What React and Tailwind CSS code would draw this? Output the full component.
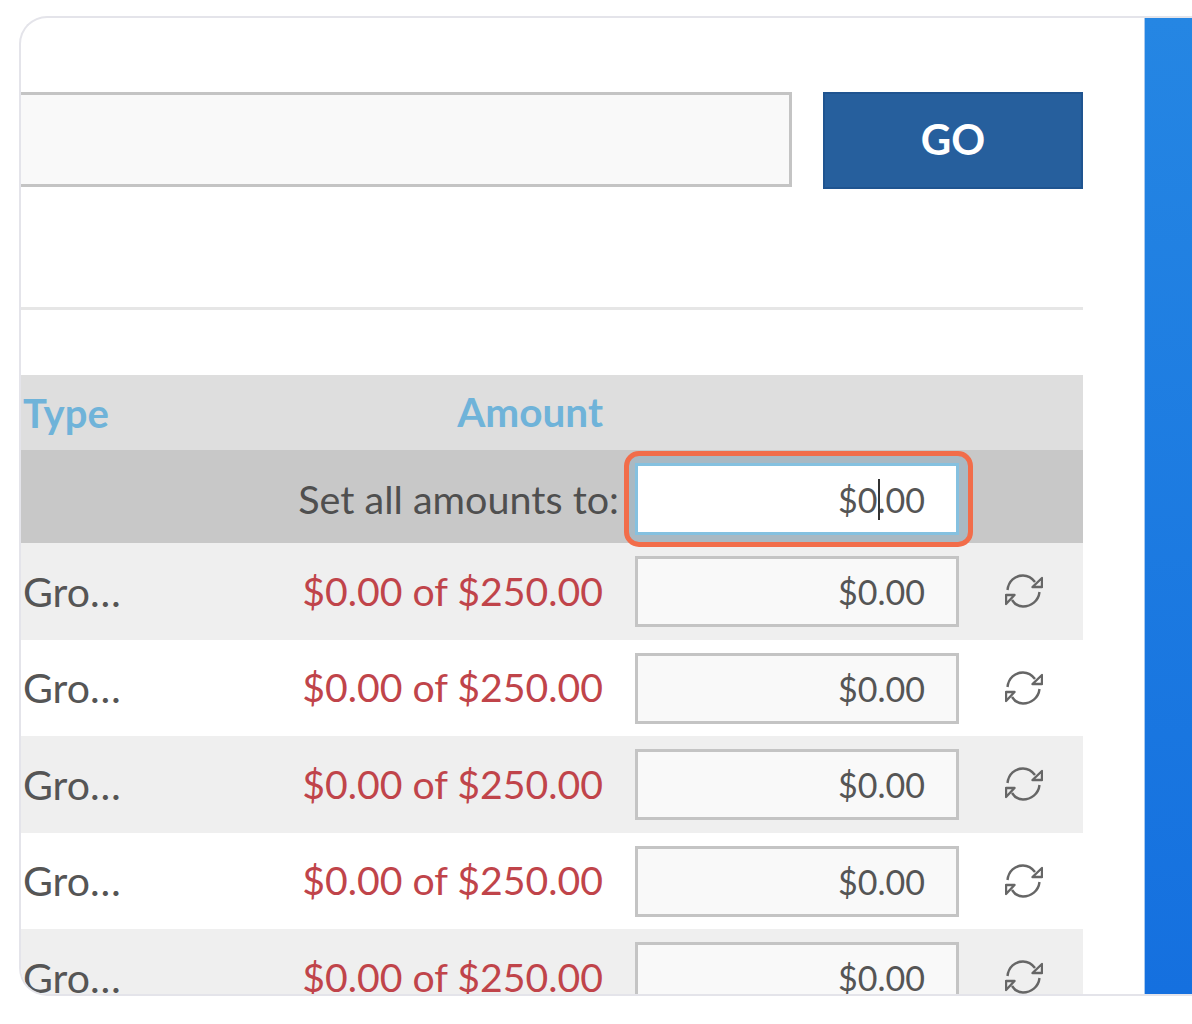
const rows = [0, 1, 2, 3, 4];

const RefreshIcon = () => (
  <svg width="38" height="36" viewBox="0 0 38 36" fill="none" stroke="#666666" strokeWidth="2.4" strokeLinejoin="round">
    <path d="M2.5 17C3.5 8 10 2.5 18 2.5C23 2.5 27 5 30 9" />
    <path d="M37 5V14H27.5Z" />
    <path d="M34.5 19C33.5 28 26 33.5 18 33.5C13 33.5 9.5 31 7 27" />
    <path d="M1 22H9.5L1 31Z" />
  </svg>
);

const AmountRow = ({ shaded }) => (
  <div className={`flex h-[96.5px] shrink-0 items-center ${shaded ? "bg-[#efefef]" : "bg-white"}`}>
    <div className="w-[280px] pl-[2px] text-[41px] text-[#555555]">Gro…</div>
    <div className="w-[302px] whitespace-nowrap text-right text-[39.2px] text-[#c0444a]">$0.00 of $250.00</div>
    <div className="ml-[32px] mt-[1px] h-[71px] w-[324px]">
      <input
        readOnly
        value="$0.00"
        className="h-full w-full border-[3px] border-[#c4c4c4] bg-[#f9f9f9] pr-[31px] text-right text-[34px] text-[#555555] outline-none"
      />
    </div>
    <div className="flex w-[124px] justify-center pl-[5px]">
      <RefreshIcon />
    </div>
  </div>
);

export default function App() {
  return (
    <div className="h-[1024px] w-[1192px] overflow-hidden bg-white pl-[19px] pt-4 font-['Lato',sans-serif] text-[39.5px]">
      <div className="flex h-[980px] overflow-hidden rounded-l-[28px] border-y-2 border-l-2 border-[#e4e4ea]">
        <div className="flex w-[1123px] shrink-0 flex-col pr-[61px]">
          {/* Search + button */}
          <div className="mt-[74px] flex h-[97px] items-start">
            <div className="h-[95px] w-[771px] border-y-[3px] border-r-[3px] border-[#c4c4c4] bg-[#f9f9f9]" />
            <button className="ml-[31px] flex h-[97px] w-[260px] items-center justify-center border-2 border-[#1f5490] bg-[#265f9d] pb-[2px] text-[42px] font-bold text-white">
              GO
            </button>
          </div>

          <div className="mt-[118px] h-[3px] shrink-0 bg-[#e6e6e6]" />

          {/* Table header */}
          <div className="mt-[65px] flex h-[75px] shrink-0 items-center bg-[#dedede] text-[40.5px] font-bold text-[#6fb3d9]">
            <div className="w-[280px] pl-[2px] text-[40px]">Type</div>
            <div className="w-[302px] text-right">Amount</div>
          </div>

          {/* Set all row */}
          <div className="flex h-[93px] shrink-0 items-center bg-[#c8c8c8] pt-[5px] text-[#4f4f4f]">
            <div className="w-[598px] text-right">Set all amounts to:</div>
            <div className="relative z-10 ml-[16px] h-[72px] w-[324px]">
              <div className="absolute -bottom-[12px] -left-[11px] -right-[14px] -top-[12px] rounded-[15px] border-[5px] border-[#f26d4a] bg-[#a9b9c3]" />
              <input
                readOnly
                value="$0.00"
                className="relative h-full w-full border-[3px] border-[#85c1e0] bg-white pr-[31px] text-right text-[34px] text-[#555555] outline-none"
              />
              <div className="absolute left-[243px] top-[16px] h-[41px] w-[2px] bg-[#333333]" />
            </div>
          </div>

          {rows.map((i) => (
            <AmountRow key={i} shaded={i % 2 === 0} />
          ))}
        </div>

        {/* Blue side panel */}
        <div className="flex-1 border-l border-[#a9c9ee] bg-gradient-to-b from-[#2586e3] to-[#1570df]" />
      </div>
    </div>
  );
}
